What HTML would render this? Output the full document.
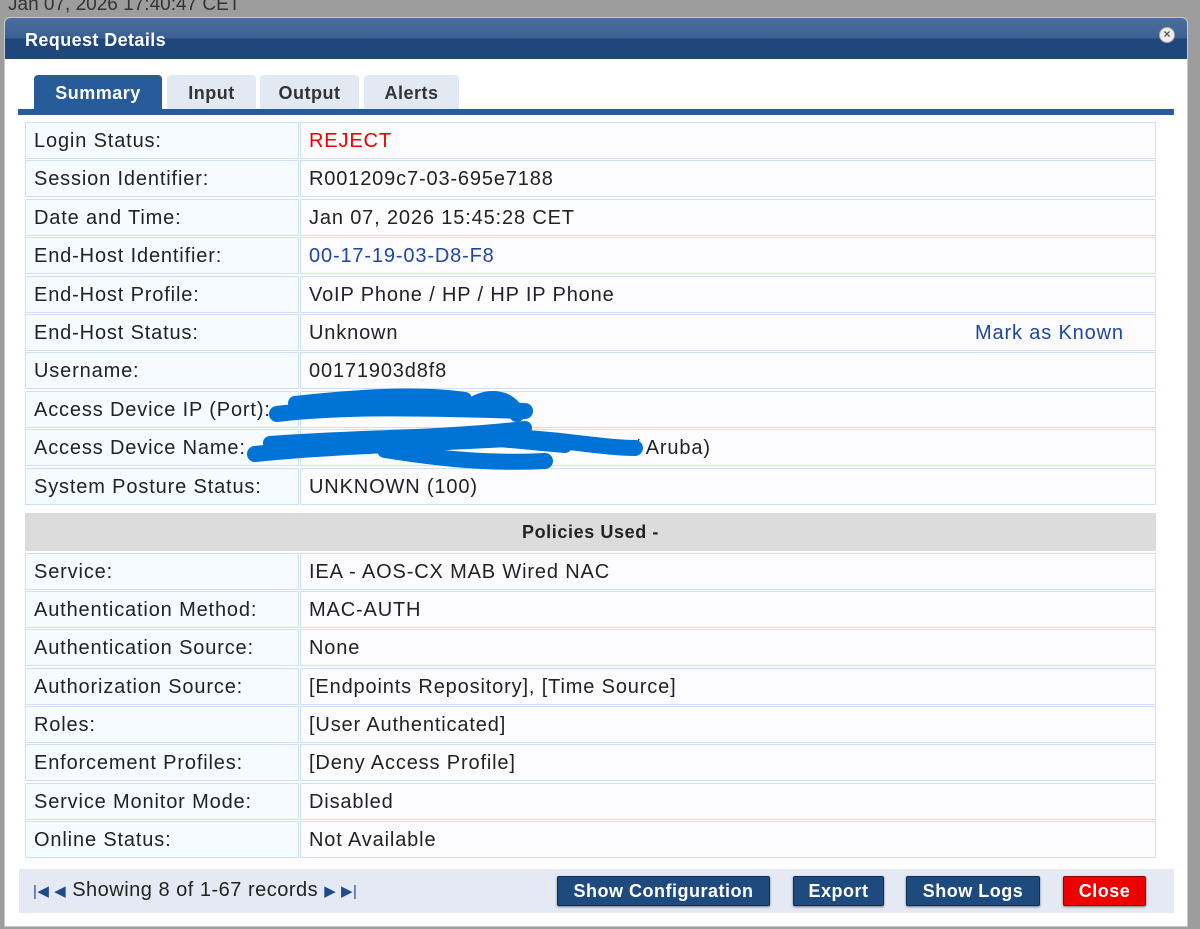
<!DOCTYPE html>
<html><head><meta charset="utf-8"><style>
*{box-sizing:border-box;margin:0;padding:0}
body{width:1200px;height:929px;background:#9d9d9d;font-family:"Liberation Sans",Arial,sans-serif;position:relative;overflow:hidden}
.dlg{position:absolute;left:4px;top:17px;width:1184px;height:910px;background:#fff;border:1px solid #c8c8c8;border-radius:6px 6px 0 0;overflow:hidden}
.title{height:41px;background:linear-gradient(#4a6e9e,#3a5f92 50%,#1f477c 50%,#1f477c);color:#fff;font-weight:bold;font-size:18px;letter-spacing:0.4px;padding:12px 0 0 20px}
.x{position:absolute;right:12px;top:9px;width:16px;height:16px;border-radius:50%;background:#eee;border:1px solid #aaa;color:#555;font-size:12px;line-height:13px;text-align:center;font-weight:bold}
.tab{position:absolute;top:57px;height:36px;background:#e3e9f3;border-radius:4px 4px 0 0;font-weight:bold;font-size:18px;letter-spacing:0.5px;color:#333;text-align:center;padding-top:8px}
.tab.on{background:#275b99;color:#fff}
.bar{position:absolute;left:13px;top:91px;width:1156px;height:6px;background:#275b99}
.row{position:absolute;left:20px;width:1131px;height:37px;font-size:20px;letter-spacing:0.85px;color:#222}
.row .l{position:absolute;left:0;top:0;width:274px;height:37px;background:#f6fbff;border:1px solid #cfe0f6;padding:7px 0 0 8px;white-space:nowrap}
.row .v{position:absolute;left:275px;top:0;width:856px;height:37px;background:#fcfcff;border:1px solid #cfe0f6;padding:7px 0 0 8px}
.ph{position:absolute;left:20px;top:495px;width:1131px;height:38px;background:#dcdcdc;font-weight:bold;font-size:18px;letter-spacing:0.6px;color:#222;text-align:center;padding-top:9px}
.foot{position:absolute;left:14px;top:851px;width:1155px;height:44px;background:#e4e9f3;font-size:20px;letter-spacing:0.5px;color:#222}
.btn{position:absolute;top:7px;height:30px;background:#1f4a7e;border:1px solid #0f2d55;border-radius:2px;color:#fff;font-weight:bold;font-size:18px;text-align:center;padding-top:4px;box-shadow:0 1px 2px #777;white-space:nowrap}
</style></head><body>
<div style="position:absolute;left:8px;top:-6px;font-size:19px;color:#333">Jan 07, 2026 17:40:47 CET</div>
<div class="dlg">
<div class="title">Request Details</div>
<div class="x">×</div>
<div class="tab on" style="left:29px;width:128px">Summary</div>
<div class="tab" style="left:162px;width:89px">Input</div>
<div class="tab" style="left:255px;width:99px">Output</div>
<div class="tab" style="left:359px;width:95px">Alerts</div>
<div class="bar"></div>

<div class="row" style="top:104px"><div class="l">Login Status:</div><div class="v" style="color:#e00">REJECT</div></div>
<div class="row" style="top:142px"><div class="l">Session Identifier:</div><div class="v">R001209c7-03-695e7188</div></div>
<div class="row" style="top:181px"><div class="l">Date and Time:</div><div class="v">Jan 07, 2026 15:45:28 CET</div></div>
<div class="row" style="top:219px"><div class="l">End-Host Identifier:</div><div class="v" style="color:#1f47a0">00-17-19-03-D8-F8</div></div>
<div class="row" style="top:258px"><div class="l">End-Host Profile:</div><div class="v">VoIP Phone / HP / HP IP Phone</div></div>
<div class="row" style="top:296px"><div class="l">End-Host Status:</div><div class="v">Unknown<span style="position:absolute;left:674px;color:#1f47a0">Mark as Known</span></div></div>
<div class="row" style="top:334px"><div class="l">Username:</div><div class="v">00171903d8f8</div></div>
<div class="row" style="top:373px"><div class="l">Access Device IP (Port):</div><div class="v"></div></div>
<div class="row" style="top:411px"><div class="l">Access Device Name:</div><div class="v"><span style="position:absolute;left:333px">/ Aruba)</span></div></div>
<div class="row" style="top:450px"><div class="l">System Posture Status:</div><div class="v">UNKNOWN (100)</div></div>
<div class="ph">Policies Used -</div>
<div class="row" style="top:535px"><div class="l">Service:</div><div class="v">IEA - AOS-CX MAB Wired NAC</div></div>
<div class="row" style="top:573px"><div class="l">Authentication Method:</div><div class="v">MAC-AUTH</div></div>
<div class="row" style="top:611px"><div class="l">Authentication Source:</div><div class="v">None</div></div>
<div class="row" style="top:650px"><div class="l">Authorization Source:</div><div class="v">[Endpoints Repository], [Time Source]</div></div>
<div class="row" style="top:688px"><div class="l">Roles:</div><div class="v">[User Authenticated]</div></div>
<div class="row" style="top:726px"><div class="l">Enforcement Profiles:</div><div class="v">[Deny Access Profile]</div></div>
<div class="row" style="top:765px"><div class="l">Service Monitor Mode:</div><div class="v">Disabled</div></div>
<div class="row" style="top:803px"><div class="l">Online Status:</div><div class="v">Not Available</div></div>

<svg style="position:absolute;left:0;top:0" width="1184" height="910">
<g stroke="#0073d6" stroke-linecap="round" fill="none">
<path d="M272 396 C340 388 420 390 520 393" stroke-width="16"/>
<path d="M290 385 C360 377 420 375 460 381" stroke-width="14"/>
<path d="M466 388 C485 376 505 380 512 396" stroke-width="16"/>
<path d="M250 436 C330 428 420 426 520 420 C560 422 600 430 630 430" stroke-width="16"/>
<path d="M265 425 C360 418 430 420 520 410" stroke-width="14"/>
<path d="M380 432 C430 440 480 446 540 443" stroke-width="16"/>
<path d="M420 422 C480 418 520 425 560 428" stroke-width="14"/>
</g></svg>

<div class="foot">
<div style="position:absolute;left:14px;top:10px"><span style="color:#1f4a8c;font-size:15px">|◀ ◀</span> Showing 8 of 1-67 records <span style="color:#1f4a8c;font-size:15px">▶ ▶|</span></div>
<div class="btn" style="left:538px;width:213px">Show Configuration</div>
<div class="btn" style="left:774px;width:91px">Export</div>
<div class="btn" style="left:887px;width:134px">Show Logs</div>
<div class="btn" style="left:1044px;width:83px;background:#e00;border-color:#900">Close</div>
</div>
</div>
</body></html>
